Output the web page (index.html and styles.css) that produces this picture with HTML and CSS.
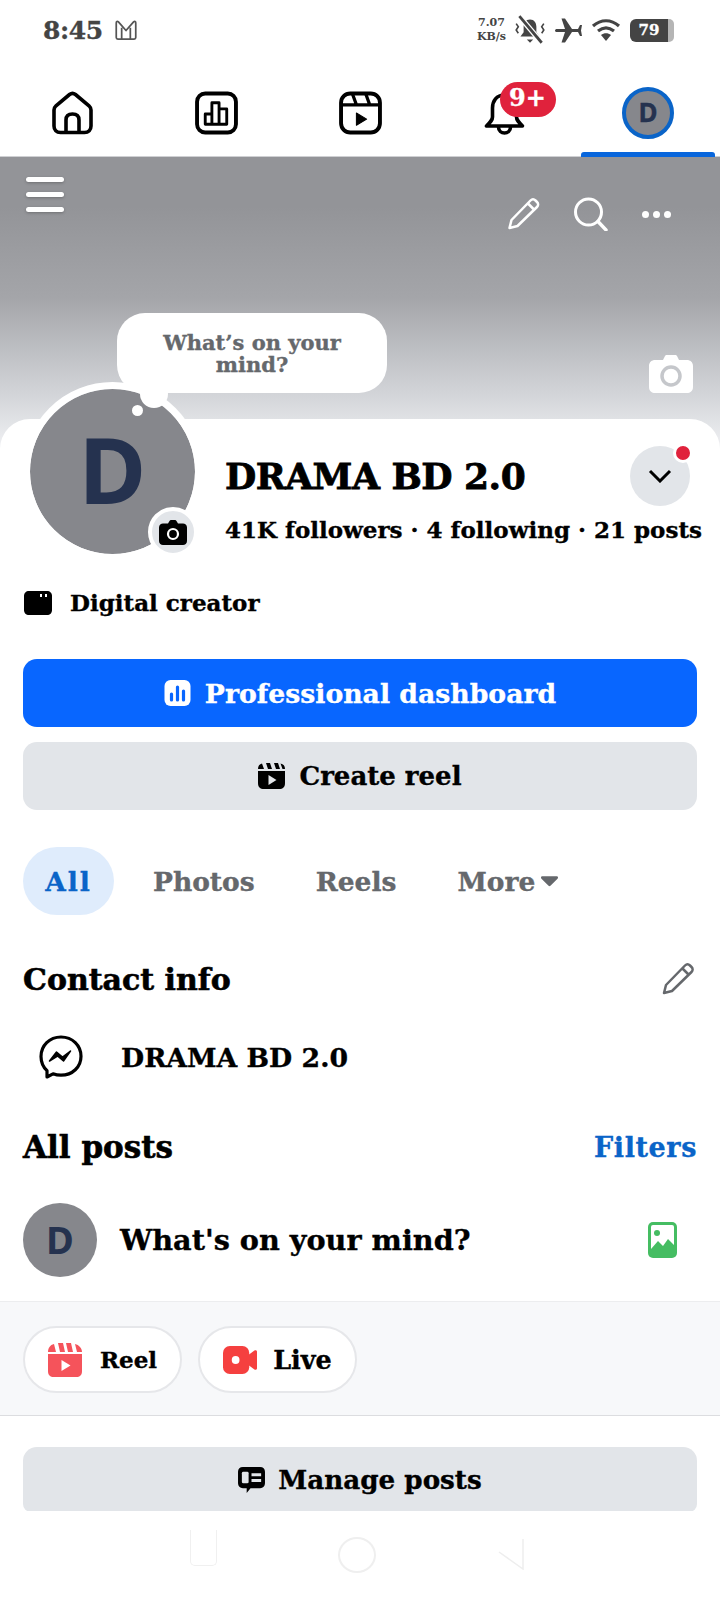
FILE: index.html
```html
<!DOCTYPE html>
<html>
<head>
  <title>DRAMA BD 2.0</title>
  <link rel="stylesheet" href="styles.css">
</head>
<body>
  <div class="statusbar">
    <div class="status-left">
      <span class="time">8:45</span>
      <svg class="mail" viewBox="0 0 24 20"><path d="M3 17V3.500c0-1.500 1-2 2-1l7 8 7-8c1-1 2-.5 2 1V17c0 1-.5 1.500-1.500 1.500h-15C3.500 18.500 3 18 3 17zM8 18V8M16 18V8" fill="none" stroke="#555" stroke-width="1.600" stroke-linejoin="round"/></svg>
    </div>
    <div class="status-right">
      <div class="speed"><span>7.07</span><span>KB/s</span></div>
      <svg class="st-bell" viewBox="0 0 32 28"><path d="M16 4c-4 0-6 3-6 7v5l-3 4h18l-3-4v-5c0-4-2-7-6-7zM13 23h6l-3 3z" fill="#444"/><path d="M6 1l21 25" stroke="#fff" stroke-width="5"/><path d="M6 1l21 25" stroke="#444" stroke-width="2.600"/><path d="M3 8l2 3-2 3 2 3M29 8l-2 3 2 3-2 3" fill="none" stroke="#444" stroke-width="1.500"/></svg>
      <svg class="st-plane" viewBox="0 0 30 26"><path d="M1 13c0-1 1-1.500 2-1.500h8L7.500 1h3.500l7 10.500h6l2-4h2l-1 5.500 1 5.500h-2l-2-4h-6L11 25H7.500L11 14.500H3c-1 0-2-.500-2-1.500z" fill="#444"/></svg>
      <svg class="st-wifi" viewBox="0 0 30 24"><path d="M2 8c8-7 18-7 26 0M7 13c5-4 11-4 16 0" fill="none" stroke="#444" stroke-width="3.200"/><path d="M10 17c3-2.500 7-2.500 10 0l-5 6z" fill="#444"/></svg>
      <div class="battery"><span class="batt-fill">79</span><span class="batt-end"></span></div>
    </div>
  </div>

  <nav class="tabs">
    <div class="tab">
      <svg class="tab-icon" viewBox="0 0 42 44"><path d="M2.500 19c0-2 .7-3 2-4.200L18 3.500c2-1.500 4-1.500 6 0l13.500 11.300c1.300 1.200 2 2.200 2 4.200v16c0 4-2.500 6.500-6.500 6.500H9c-4 0-6.500-2.500-6.500-6.500z" fill="none" stroke="#000" stroke-width="3.600"/><path d="M14.500 41V29c0-4 2.500-6 6.500-6s6.500 2 6.500 6v12" fill="none" stroke="#000" stroke-width="3.600"/></svg>
    </div>
    <div class="tab">
      <svg class="tab-icon" viewBox="0 0 42 42"><rect x="2" y="2" width="38" height="38" rx="8" fill="none" stroke="#000" stroke-width="3.800"/><path d="M10 32V22h6.500v10zM16.500 32V11h7v21zM23.500 32V17h7.500v15z" fill="none" stroke="#000" stroke-width="2.800" stroke-linejoin="round"/></svg>
    </div>
    <div class="tab">
      <svg class="tab-icon" viewBox="0 0 42 42"><rect x="2" y="2" width="38" height="38" rx="9" fill="none" stroke="#000" stroke-width="3.800"/><path d="M2 13h38M13 2l4 11M26 2l4 11" fill="none" stroke="#000" stroke-width="3.200"/><path d="M17 21l10 6-10 6z" fill="#000" stroke="#000" stroke-linejoin="round"/></svg>
    </div>
    <div class="tab">
      <div class="bell-wrap">
        <svg class="tab-icon" viewBox="0 0 42 44"><path d="M21 4c-8 0-12 6-12 13v9c0 3-2 5-6 9h36c-4-4-6-6-6-9v-9c0-7-4-13-12-13z" fill="none" stroke="#000" stroke-width="3.600" stroke-linejoin="round"/><path d="M15 36c0 4 3 6 6 6s6-2 6-6" fill="none" stroke="#000" stroke-width="3.600"/></svg>
        <span class="badge">9+</span>
      </div>
    </div>
    <div class="tab active">
      <div class="tab-avatar">D</div>
    </div>
  </nav>

  <div class="cover">
    <div class="cover-tools">
      <div class="burger"><span></span><span></span><span></span></div>
      <div class="cover-actions">
        <svg class="cover-icon" viewBox="0 0 34 34"><path d="M3 31l2-8L24 3.500c1.500-1.500 3.500-1.500 5 0l1.500 1.500c1.500 1.500 1.500 3.500 0 5L11 29zM21.500 6.500l6.500 6.500" fill="none" stroke="#fff" stroke-width="2.500" stroke-linejoin="round"/></svg>
        <svg class="cover-icon" viewBox="0 0 35 34"><circle cx="15.500" cy="15" r="13" fill="none" stroke="#fff" stroke-width="3"/><path d="M25 24.500l8 8.500" stroke="#fff" stroke-width="3.400" stroke-linecap="round"/></svg>
        <div class="dots"><span></span><span></span><span></span></div>
      </div>
    </div>
    <div class="bubble">What’s on your mind?</div>
    <svg class="cover-camera" viewBox="0 0 44 38"><path d="M6 5h8l2-4c.5-.7 1-1 2-1h8c1 0 1.500.3 2 1l2 4h8c3 0 6 2 6 6v21c0 4-3 6-6 6H6c-3 0-6-2-6-6V11c0-4 3-6 6-6z" fill="#fff"/><circle cx="22" cy="21" r="9" fill="none" stroke="#c5c7cb" stroke-width="3.500"/></svg>
  </div>

  <main class="panel">
    <div class="avatar-ring">
      <div class="avatar">D</div>
      <span class="bubble-tail"></span>
      <span class="bubble-dot"></span>
      <div class="avatar-cam">
        <svg viewBox="0 0 28 25"><path d="M4 3.500h5l1.500-2.500c.4-.6.800-1 1.500-1h4c.7 0 1.100.4 1.500 1L19 3.500h5c2 0 4 1.500 4 4V21c0 2.500-2 4-4 4H4c-2 0-4-1.500-4-4V7.500c0-2.500 2-4 4-4z" fill="#000"/><circle cx="14" cy="14" r="5" fill="none" stroke="#fff" stroke-width="2.200"/></svg>
      </div>
    </div>

    <div class="identity">
      <div class="name-row">
        <h1 class="name">DRAMA BD 2.0</h1>
        <div class="chevron-btn">
          <svg viewBox="0 0 24 14"><path d="M2 2l10 10L22 2" fill="none" stroke="#000" stroke-width="3"/></svg>
          <span class="red-dot"></span>
        </div>
      </div>
      <div class="stats">41K followers · 4 following · 21 posts</div>
    </div>

    <div class="category">
      <svg viewBox="0 0 28 24"><path d="M5 0h18c3 0 5 2 5 5v14c0 3-2 5-5 5H5c-3 0-5-2-5-5V5c0-3 2-5 5-5z" fill="#000"/><path d="M17 3v3M22 3v3" stroke="#fff" stroke-width="2"/></svg>
      <span>Digital creator</span>
    </div>

    <div class="buttons">
      <div class="btn btn-blue">
        <svg class="btn-icon" viewBox="0 0 26 26"><rect width="26" height="26" rx="6" fill="#fff"/><path d="M7 14v6M13 7v13M19 11v9" stroke="#0866ff" stroke-width="3.200" stroke-linecap="round"/></svg>
        <span>Professional dashboard</span>
      </div>
      <div class="btn btn-gray">
        <svg class="btn-icon" viewBox="0 0 27 26"><path d="M0 8h27v12c0 4-2 6-6 6H6c-4 0-6-2-6-6zM0 6c0-3 1.500-5 4-5.500L6 6zM8 0h4l2 6h-4zM16 0h4l2 6h-4zM22.500.5C25.500 1 27 3 27 6h-2.500z" fill="#000"/><path d="M10.500 12l8 5-8 5z" fill="#e2e5e9"/></svg>
        <span>Create reel</span>
      </div>
    </div>

    <div class="filters">
      <span class="chip active">All</span>
      <span class="chip">Photos</span>
      <span class="chip">Reels</span>
      <span class="chip more">More<svg viewBox="0 0 18 11"><path d="M1.500 0h15c1.500 0 2 1.500 1 2.500L10 10c-.6.600-1.400.600-2 0L.500 2.500c-1-1-.500-2.500 1-2.500z" fill="#65686c"/></svg></span>
    </div>

    <div class="section-head contact-head">
      <h2>Contact info</h2>
      <svg class="edit" viewBox="0 0 34 34"><path d="M3 31l2-8L24 3.500c1.500-1.500 3.500-1.500 5 0l1.500 1.500c1.500 1.500 1.500 3.500 0 5L11 29zM21.500 6.500l6.500 6.500" fill="none" stroke="#65686c" stroke-width="2.500" stroke-linejoin="round"/></svg>
    </div>
    <div class="contact-row">
      <svg viewBox="0 0 44 44"><path d="M22 2C10.500 2 2 10.500 2 21.500c0 5.700 2.300 10.700 6 14.200V42l6-3.200c2.400.9 5 1.400 8 1.400 11.500 0 20-8.200 20-19S33.500 2 22 2z" fill="none" stroke="#000" stroke-width="3.200" stroke-linejoin="round"/><path d="M10.500 26l7-9 6 5 8-6-7 10-6-5z" fill="#000" stroke="#000" stroke-width="1.500" stroke-linejoin="round"/></svg>
      <span>DRAMA BD 2.0</span>
    </div>

    <div class="section-head posts-head">
      <h2>All posts</h2>
      <span class="filters-link">Filters</span>
    </div>
    <div class="composer">
      <div class="small-avatar">D</div>
      <span class="composer-text">What's on your mind?</span>
      <svg class="photo-icon" viewBox="0 0 29 36"><rect width="29" height="36" rx="5" fill="#45bd62"/><rect x="3" y="3" width="23" height="30" rx="2" fill="#fff"/><circle cx="9" cy="11" r="3" fill="#45bd62"/><path d="M3 27l7-8 5 5 5-7 6 6v12H3z" fill="#45bd62"/></svg>
    </div>

    <div class="quick-bar">
      <div class="pill pill-reel">
        <svg viewBox="0 0 34 34"><path d="M0 11h34v17c0 4-2 6-6 6H6c-4 0-6-2-6-6zM0 9c0-4 2-7 6-8l2 8zM10 0h5l2 9h-5zM18 0h5l2 9h-5zM27 1c4 1 7 4 7 8h-5z" fill="#f5535b"/><path d="M13.500 17l9 5.500-9 5.500z" fill="#fff"/></svg>
        <span>Reel</span>
      </div>
      <div class="pill pill-live">
        <svg viewBox="0 0 35 29"><rect width="27" height="29" rx="7" fill="#f5403f"/><path d="M24 11l8-6c1.500-1 3-.5 3 1v17c0 1.500-1.500 2-3 1l-8-6z" fill="#f5403f"/><circle cx="13" cy="14.500" r="4" fill="#fff"/></svg>
        <span>Live</span>
      </div>
    </div>

    <div class="manage">
      <svg class="btn-icon" viewBox="0 0 28 27"><path d="M5 0h18c3 0 5 2 5 5v12c0 3-2 5-5 5H13l-4 5v-5H5c-3 0-5-2-5-5V5c0-3 2-5 5-5z" fill="#000"/><rect x="4" y="5" width="7" height="12" rx="1.500" fill="#e2e5e9"/><path d="M14 8h10M14 14h10" stroke="#e2e5e9" stroke-width="3"/></svg>
      <span>Manage posts</span>
    </div>
  </main>

  <div class="navbar">
    <span class="nav-square"></span>
    <span class="nav-circle"></span>
    <svg class="nav-back" viewBox="0 0 26 32"><path d="M25 1v30L1 14" fill="none" stroke="#eeeeee" stroke-width="1.500"/></svg>
  </div>
</body>
</html>
```

FILE: styles.css
```css
* {
  box-sizing: border-box;
  margin: 0;
  padding: 0;
}
body {
  position: relative;
  width: 720px;
  height: 1600px;
  overflow: hidden;
  background-color: #fff;
  font-family: "DejaVu Serif", "Liberation Serif", serif;
  font-weight: bold;
  color: #000;
  -webkit-text-stroke: 0.35px;
}

/* status bar */
.statusbar {
  height: 60px;
  padding: 0 46px 0 43px;
  display: flex;
  justify-content: space-between;
  align-items: center;
  color: #444;
}
.status-left {
  display: flex;
  align-items: center;
  gap: 10px;
}
.time {
  font-size: 25px;
  letter-spacing: -0.4px;
}
.mail {
  width: 26px;
  height: 22px;
}
.status-right {
  display: flex;
  align-items: center;
  gap: 7px;
}
.speed {
  display: flex;
  flex-direction: column;
  align-items: center;
  font-size: 11px;
  line-height: 14px;
  -webkit-text-stroke: 0;
}
.st-bell {
  width: 34px;
  height: 30px;
}
.st-plane {
  width: 30px;
  height: 27px;
}
.st-wifi {
  width: 30px;
  height: 24px;
}
.battery {
  display: flex;
  align-items: center;
  margin-left: 2px;
}
.batt-fill {
  width: 38px;
  height: 23px;
  background-color: #444;
  color: #fff;
  border-radius: 6px 0 0 6px;
  font-size: 15px;
  line-height: 22px;
  text-align: center;
}
.batt-end {
  width: 6px;
  height: 23px;
  background-color: #b5b5b5;
  border-radius: 0 5px 5px 0;
}

/* top tabs */
.tabs {
  height: 97px;
  display: grid;
  grid-template-columns: repeat(5, 144px);
  border-bottom: 1px solid #cfd0d3;
}
.tab {
  position: relative;
  display: flex;
  align-items: center;
  justify-content: center;
  padding-top: 9px;
}
.tab-icon {
  display: block;
  width: 43px;
  height: 44px;
}
.tab.active::after {
  content: "";
  position: absolute;
  left: 5px;
  right: 5px;
  bottom: -1px;
  height: 5px;
  background-color: #0866dc;
  border-radius: 3px 3px 0 0;
}
.bell-wrap {
  position: relative;
}
.badge {
  position: absolute;
  left: 17px;
  top: -9px;
  width: 56px;
  height: 35px;
  border-radius: 18px;
  background-color: #e0223c;
  color: #fff;
  font-size: 24px;
  line-height: 32px;
  text-align: center;
}
.tab-avatar {
  width: 52px;
  height: 52px;
  border-radius: 50%;
  border: 4px solid #0a64c8;
  background-color: #86878c;
  color: #25324f;
  font-family: "Noto Sans", sans-serif;
  font-size: 26px;
  line-height: 42px;
  text-align: center;
}

/* cover */
.cover {
  position: relative;
  height: 300px;
  margin-bottom: -38px;
  background: linear-gradient(#939498 0, #939498 50px, #a4a5a9 140px, #d4d6da 240px, #eff0f3 290px);
}
.cover-tools {
  display: flex;
  justify-content: space-between;
  padding: 20px 49px 0 26px;
}
.burger {
  display: flex;
  flex-direction: column;
  gap: 10px;
}
.burger span {
  display: block;
  width: 38px;
  height: 5px;
  border-radius: 3px;
  background-color: #fff;
  box-shadow: 0 1px 3px rgba(0, 0, 0, 0.25);
}
.cover-actions {
  display: flex;
  align-items: center;
  gap: 32px;
  margin-top: 20px;
}
.cover-icon {
  display: block;
  width: 35px;
  height: 34px;
}
.dots {
  display: flex;
  gap: 4px;
  margin-left: 2px;
}
.dots span {
  width: 7px;
  height: 7px;
  border-radius: 50%;
  background-color: #fff;
}
.bubble {
  position: absolute;
  left: 117px;
  top: 156px;
  width: 270px;
  height: 80px;
  padding: 19px 30px 0;
  border-radius: 28px;
  background-color: #fff;
  color: #65686c;
  font-size: 21px;
  line-height: 22px;
  text-align: center;
}
.cover-camera {
  position: absolute;
  left: 649px;
  top: 198px;
  width: 44px;
  height: 38px;
}

/* profile panel */
.panel {
  position: relative;
  height: 1092px;
  background-color: #fff;
  border-radius: 30px 30px 0 0;
  padding-top: 27px;
}
.avatar-ring {
  position: absolute;
  left: 23px;
  top: -37px;
}
.avatar {
  width: 179px;
  height: 179px;
  border: 7px solid #fff;
  border-radius: 50%;
  background-color: #86878c;
  background-clip: padding-box;
  color: #25324f;
  font-family: "Noto Sans", sans-serif;
  font-size: 92px;
  line-height: 160px;
  text-align: center;
  -webkit-text-stroke: 0;
}
.bubble-tail {
  position: absolute;
  left: 117px;
  top: -2px;
  width: 28px;
  height: 28px;
  border-radius: 50%;
  background-color: #fff;
}
.bubble-dot {
  position: absolute;
  left: 109px;
  top: 23px;
  width: 11px;
  height: 11px;
  border-radius: 50%;
  background-color: #fff;
}
.avatar-cam {
  position: absolute;
  left: 125px;
  top: 125px;
  width: 50px;
  height: 50px;
  border: 4px solid #fff;
  border-radius: 50%;
  background-color: #e2e5e9;
  display: flex;
  align-items: center;
  justify-content: center;
}
.avatar-cam svg {
  width: 28px;
  height: 25px;
}

.identity {
  padding-left: 225px;
}
.name-row {
  display: flex;
  justify-content: space-between;
  align-items: center;
  height: 60px;
  padding-right: 30px;
}
.name {
  font-size: 36px;
  letter-spacing: -0.5px;
  -webkit-text-stroke: 0.8px #000;
}
.chevron-btn {
  position: relative;
  width: 60px;
  height: 60px;
  border-radius: 50%;
  background-color: #e2e5e9;
  display: flex;
  align-items: center;
  justify-content: center;
}
.chevron-btn svg {
  width: 24px;
  height: 14px;
}
.red-dot {
  position: absolute;
  right: -3px;
  top: -3px;
  width: 20px;
  height: 20px;
  border: 3px solid #fff;
  border-radius: 50%;
  background-color: #e0223c;
}
.stats {
  margin-top: 12px;
  font-size: 23px;
  line-height: 24px;
  white-space: nowrap;
}
.category {
  margin-top: 49px;
  padding-left: 24px;
  display: flex;
  align-items: center;
  gap: 18px;
  font-size: 23px;
  line-height: 24px;
}
.category svg {
  width: 28px;
  height: 24px;
}

/* buttons */
.buttons {
  margin-top: 44px;
  padding: 0 23px;
  display: flex;
  flex-direction: column;
  gap: 15px;
}
.btn {
  height: 68px;
  border-radius: 14px;
  display: flex;
  align-items: center;
  justify-content: center;
  gap: 14px;
  font-size: 26px;
}
.btn-icon {
  width: 27px;
  height: 26px;
}
.btn-blue {
  background-color: #0866ff;
  color: #fff;
  font-size: 26.7px;
}
.btn-gray {
  background-color: #e2e5e9;
}

/* filter chips */
.filters {
  margin-top: 37px;
  padding-left: 23px;
  display: flex;
}
.chip {
  height: 68px;
  padding: 0 30.5px;
  border-radius: 34px;
  color: #65686c;
  font-size: 26.5px;
  display: flex;
  align-items: center;
}
.chip.active {
  width: 91px;
  padding: 0;
  margin-right: 8.5px;
  justify-content: center;
  letter-spacing: 2px;
  background-color: #dfecfc;
  color: #0a64c8;
}
.chip.more svg {
  width: 17px;
  height: 11px;
  margin-left: 6px;
}

/* sections */
.section-head {
  padding: 0 23px;
  display: flex;
  justify-content: space-between;
  align-items: center;
}
.section-head h2 {
  font-size: 30px;
  -webkit-text-stroke: 0.6px #000;
}
.contact-head {
  margin-top: 47px;
  height: 34px;
  padding-right: 25px;
}
.edit {
  width: 34px;
  height: 34px;
}
.contact-row {
  margin-top: 39px;
  padding-left: 39px;
  display: flex;
  align-items: center;
  gap: 38px;
  font-size: 26.7px;
}
.contact-row svg {
  width: 44px;
  height: 44px;
}
.posts-head {
  margin-top: 51px;
  height: 34px;
}
.posts-head h2 {
  font-size: 31px;
}
.filters-link {
  color: #0a64c8;
  font-size: 27px;
  letter-spacing: 0.6px;
}
.composer {
  margin-top: 39px;
  padding: 0 43px 0 23px;
  display: flex;
  align-items: center;
}
.small-avatar {
  width: 74px;
  height: 74px;
  border-radius: 50%;
  background-color: #86878c;
  color: #25324f;
  font-family: "Noto Sans", sans-serif;
  font-size: 38px;
  line-height: 72px;
  text-align: center;
  -webkit-text-stroke: 0;
}
.composer-text {
  flex: 1;
  margin-left: 23px;
  font-size: 28.7px;
}
.photo-icon {
  width: 29px;
  height: 36px;
}
.quick-bar {
  margin-top: 24px;
  height: 115px;
  padding: 24px 23px 0;
  background-color: #f7f8fa;
  border-top: 1px solid #ecedef;
  border-bottom: 1px solid #dcdde0;
  display: flex;
  gap: 16px;
}
.pill {
  width: 159px;
  height: 67px;
  border: 2px solid #e6e7ea;
  border-radius: 34px;
  background-color: #fff;
  display: flex;
  align-items: center;
  justify-content: center;
  gap: 18px;
}
.pill svg {
  width: 34px;
  height: 34px;
}
.pill-reel {
  font-size: 23px;
}
.pill-live {
  font-size: 25.5px;
  gap: 16px;
}
.manage {
  margin: 31px 23px 0;
  height: 65px;
  border-radius: 14px 14px 8px 8px;
  background-color: #e2e5e9;
  display: flex;
  align-items: center;
  justify-content: center;
  gap: 13px;
  font-size: 26.2px;
}

/* android buttons, barely visible */
.navbar {
  position: absolute;
  left: 0;
  top: 1511px;
  width: 720px;
  height: 89px;
  background-color: #fff;
}
.nav-square {
  position: absolute;
  left: 190px;
  top: 19px;
  width: 27px;
  height: 36px;
  border: 1px solid #f0f0f0;
  border-top: 0;
  border-radius: 0 0 5px 5px;
}
.nav-circle {
  position: absolute;
  left: 338px;
  top: 26px;
  width: 38px;
  height: 36px;
  border: 2px solid #efefef;
  border-radius: 50%;
}
.nav-back {
  position: absolute;
  left: 498px;
  top: 27px;
  width: 26px;
  height: 32px;
}
```
